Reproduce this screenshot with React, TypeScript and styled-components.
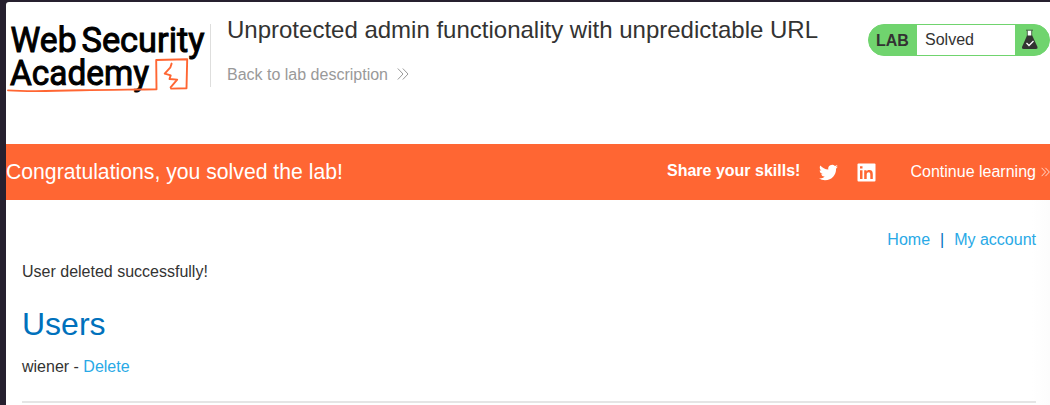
import React from "react";
import styled, { createGlobalStyle } from "styled-components";

const GlobalStyle = createGlobalStyle`
  * { box-sizing: border-box; }
  body {
    margin: 0;
    background: #26202f;
    color: #333332;
    font: 16px/20px "Liberation Sans", Arial, sans-serif;
    overflow: hidden;
  }
  a { text-decoration: none; }
`;

const Frame = styled.div`
  height: 405px;
  padding: 2px 0 0 6px;
  overflow: hidden;
`;

const Page = styled.main`
  height: 403px;
  background: #fff;
  border-top-left-radius: 3px;
  overflow: hidden;
`;

const Header = styled.header`
  display: flex;
  height: 142px;
  padding-top: 22px;
`;

const LogoDivider = styled.div`
  width: 205px;
  height: 63px;
  border-right: 1px solid #dededd;
`;

const Logo = styled.svg`
  display: block;
  width: 204px;
  height: 72px;
  overflow: visible;
`;

const Heading = styled.div`
  flex: 1;
  padding-left: 16px;
  white-space: nowrap;
`;

const Title = styled.h2`
  margin: -8px 0 0;
  font-size: 24px;
  font-weight: 400;
  line-height: 28px;
`;

const BackLink = styled.a`
  display: flex;
  align-items: center;
  gap: 9px;
  margin-top: 21px;
  color: #999;

  svg { margin-top: -2px; }
`;

const LabStatus = styled.div`
  display: flex;
  flex: none;
  width: 182px;
  height: 32px;
  border: 1px solid #70d46e;
  border-radius: 16px;
  background: #70d46e;
  overflow: hidden;
`;

const LabTag = styled.strong`
  width: 48px;
  padding-left: 7px;
  line-height: 31px;
`;

const LabState = styled.span`
  width: 98px;
  padding-left: 8px;
  background: #fff;
  line-height: 29px;
`;

const Flask = styled.svg`
  margin: 4px 0 0 6px;
`;

const Banner = styled.section`
  display: flex;
  align-items: center;
  height: 56px;
  background: #f63;
  color: #fff;
  white-space: nowrap;
`;

const BannerMessage = styled.p`
  flex: 1;
  margin: 0;
  font-size: 21.2px;
`;

const Share = styled.div`
  display: flex;
  align-items: center;
  gap: 19px;
  width: 243.500px;
`;

const ShareLabel = styled.strong`
  margin-top: -3px;
`;

const Continue = styled.a`
  display: flex;
  align-items: center;
  gap: 5px;
  width: 139.500px;
  overflow: hidden;
`;

const Content = styled.section`
  height: 205px;
  padding: 30px 14px 0 16px;
  background: linear-gradient(to right, #fff 1026px, #fcfcfc 1044px);
`;

const Nav = styled.nav`
  display: flex;
  justify-content: flex-end;
  gap: 10px;
  color: #0071bc;
`;

const Link = styled.a`
  color: #29a9e6;
`;

const Message = styled.p`
  margin: 12px 0 0;
`;

const Users = styled.h1`
  margin: 24px 0 0;
  color: #0071bc;
  font-size: 32px;
  font-weight: 400;
  line-height: 36px;
`;

const UserRow = styled.div`
  margin-top: 15px;
`;

const Rule = styled.hr`
  height: 2px;
  margin: 24px 0 0;
  border: 0;
  background: #e5e5e5;
`;

const Chevrons = ({ color }: { color: string }) => (
  <svg width="12" height="14" viewBox="0 0 12 14" fill="none" stroke={color} strokeWidth="1">
    <path d="M.8 1.500 6 7 .8 12.500M5.800 1.500 11 7l-5.200 5.500" />
  </svg>
);

const AcademyLogo = () => (
  <Logo viewBox="6 24 204 72" role="img" aria-label="Web Security Academy">
    <g fill="#000" stroke="#000" strokeWidth="1" fontFamily="Roboto, sans-serif" fontWeight="400" fontSize="35.5">
      <text x="10.5" y="52.3" textLength="66" lengthAdjust="spacingAndGlyphs">Web</text>
      <text x="81.5" y="52.3" textLength="123" lengthAdjust="spacingAndGlyphs">Security</text>
      <text x="10" y="84.7" textLength="139" lengthAdjust="spacingAndGlyphs">Academy</text>
    </g>
    <g fill="none" stroke="#f63" strokeLinejoin="round" strokeLinecap="round">
      <path strokeWidth="1.900" d="M8 90.400c20 1.400 47 .7 73-.1 27-.7 51-.6 75.500-1L156.200 60l31-.8-.7 29-15.500.4" />
      <path strokeWidth="1.900" d="m171.600 63.600-1.200 3.700-5.700 6.400 6 1.700-1.200 3.600 7.700.6-6.600 7.700" />
    </g>
  </Logo>
);

export default function App() {
  return (
    <>
      <GlobalStyle />
      <Frame>
        <Page>
          <Header>
            <LogoDivider><AcademyLogo /></LogoDivider>
            <Heading>
              <Title>Unprotected admin functionality with unpredictable URL</Title>
              <BackLink>Back to lab description <Chevrons color="#999" /></BackLink>
            </Heading>
            <LabStatus>
              <LabTag>LAB</LabTag>
              <LabState>Solved</LabState>
              <Flask width="18" height="22" viewBox="0 0 18 22">
                <path d="M6.500 1.500v5.500h4v-5.500" fill="#fff" />
                <path d="M5 1.200h7M6.300 1.500v6M10.700 1.500v6" stroke="#333332" strokeWidth=".7" />
                <path d="M6 6.500h5.200L16.500 18q.5 2-1.500 2H2.500Q.5 20 1 18Z" fill="#333332" />
                <path d="m5.500 14 2.500 2.500 4.500-4.500" fill="none" stroke="#fff" strokeWidth="1.300" />
              </Flask>
            </LabStatus>
          </Header>
          <Banner>
            <BannerMessage>Congratulations, you solved the lab!</BannerMessage>
            <Share>
              <ShareLabel>Share your skills!</ShareLabel>
              <svg width="19" height="19" viewBox="0 0 24 24" fill="#fff">
                <path d="M23.950 4.570a10 10 0 0 1-2.820.77 4.960 4.960 0 0 0 2.160-2.720c-.95.55-2 .95-3.130 1.180a4.920 4.920 0 0 0-8.380 4.480C7.690 8.090 4.070 6.130 1.640 3.160a4.820 4.820 0 0 0-.67 2.480c0 1.710.87 3.210 2.190 4.100a4.900 4.900 0 0 1-2.230-.62v.06a4.920 4.920 0 0 0 3.950 4.830 5 5 0 0 1-2.210.08 4.940 4.940 0 0 0 4.600 3.420A9.870 9.870 0 0 1 0 19.540a13.990 13.990 0 0 0 7.550 2.210c9.050 0 14-7.500 14-13.980 0-.21 0-.42-.02-.63a9.940 9.940 0 0 0 2.420-2.570Z" />
              </svg>
              <svg width="19" height="19" viewBox="0 0 19 19">
                <rect x=".5" y=".5" width="18" height="18" rx="1" fill="#fff" />
                <path d="M3 7.300h2.500V16H3ZM3 3.300h2.500v2.300H3ZM7.200 7.300h2.400v1.100c.5-.9 1.500-1.400 2.700-1.400 2.700 0 3.500 1.600 3.500 4.200V16h-2.500v-4.300c0-1.400-.3-2.400-1.600-2.400-1.500 0-2 1-2 2.500V16H7.200Z" fill="#f63" />
              </svg>
            </Share>
            <Continue>Continue learning <Chevrons color="#fff" /></Continue>
          </Banner>
          <Content>
            <Nav><Link>Home</Link><span>|</span><Link>My account</Link></Nav>
            <Message>User deleted successfully!</Message>
            <Users>Users</Users>
            <UserRow>wiener - <Link>Delete</Link></UserRow>
            <Rule />
          </Content>
        </Page>
      </Frame>
    </>
  );
}
